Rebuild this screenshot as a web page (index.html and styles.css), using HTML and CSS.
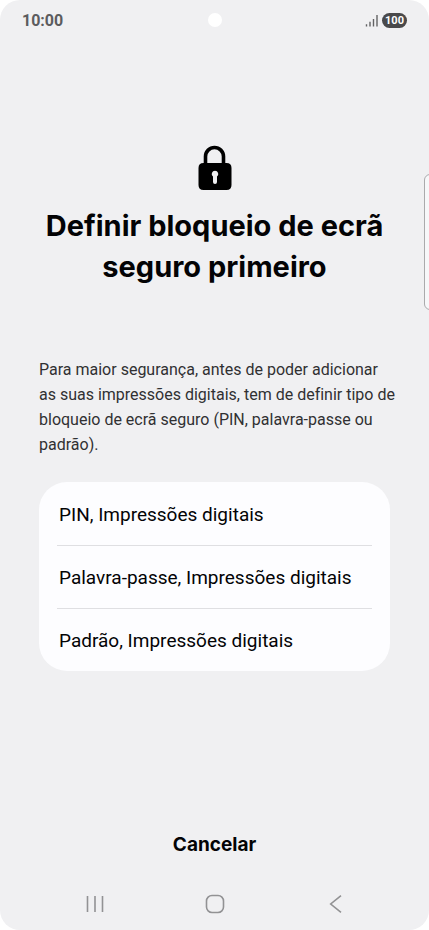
FILE: index.html
```html
<!DOCTYPE html>
<html lang="pt">
<head>
<meta charset="utf-8">
<meta name="viewport" content="width=device-width, initial-scale=1">
<title>Definir bloqueio de ecrã</title>
<link rel="stylesheet" href="styles.css">
</head>
<body>
<div class="screen">
  <header class="status">
    <time class="clock">10:00</time>
    <span class="camera"></span>
    <div class="indicators">
      <svg class="signal" viewBox="0 0 13 13" aria-hidden="true">
        <path d="M1.5 10.2v2.300M5 7.700v4.800M8.500 5v7.500M12 1v11.500"/>
      </svg>
      <span class="battery">100</span>
    </div>
  </header>
  <main class="content">
    <svg class="lock" viewBox="0 0 34 46" aria-hidden="true">
      <path class="shackle" d="M7.500 20V11.500a9 9 0 0 1 18 0V20"/>
      <path class="case" fill-rule="evenodd" d="M5.500 18H28.500Q33.500 18 33.500 23V40Q33.500 45 28.500 45H5.500Q0.500 45 0.500 40V23Q0.500 18 5.500 18ZM17 25.700A3.300 3.300 0 0 0 15 31.600V37A2 2 0 0 0 19 37V31.600A3.300 3.300 0 0 0 17 25.700Z"/>
    </svg>
    <h1 class="title">Definir bloqueio de ecrã seguro primeiro</h1>
    <p class="description">Para maior segurança, antes de poder adicionar as suas impressões digitais, tem de definir tipo de bloqueio de ecrã seguro (PIN, palavra-passe ou padrão).</p>
    <ul class="options">
      <li class="item"><button class="option" type="button">PIN, Impressões digitais</button></li>
      <li class="item"><button class="option" type="button">Palavra-passe, Impressões digitais</button></li>
      <li class="item"><button class="option" type="button">Padrão, Impressões digitais</button></li>
    </ul>
  </main>
  <button class="cancel" type="button">Cancelar</button>
  <nav class="navbar">
    <button class="key" type="button" aria-label="Recentes">
      <svg class="glyph" viewBox="0 0 20 20"><path d="M2.500 2v16M10 2v16M17.500 2v16"/></svg>
    </button>
    <button class="key" type="button" aria-label="Início">
      <svg class="glyph" viewBox="0 0 20 20"><rect x="1.500" y="1.500" width="17" height="17" rx="5.500"/></svg>
    </button>
    <button class="key" type="button" aria-label="Voltar">
      <svg class="glyph" viewBox="0 0 20 20"><path d="M16 1.700L5.700 10l10.300 8.300"/></svg>
    </button>
  </nav>
  <span class="edge-handle"></span>
</div>
</body>
</html>
```
FILE: styles.css
```css
* {
  box-sizing: border-box;
}

body {
  margin: 0;
  background: #fff;
  font-family: Roboto, "Liberation Sans", sans-serif;
  font-variant-ligatures: none;
  color: #030305;
}

button {
  border: 0;
  padding: 0;
  background: none;
  font: inherit;
  color: inherit;
  cursor: pointer;
}

.screen {
  position: relative;
  display: flex;
  flex-direction: column;
  min-height: 100vh;
  overflow: hidden;
  border-radius: 20px;
  background: #f0f0f2;
}

.status {
  display: grid;
  grid-template-columns: 1fr auto 1fr;
  align-items: center;
  height: 40px;
  padding: 0 22px;
}

.clock {
  font-size: 16px;
  font-weight: 700;
  color: #5c5c5e;
}

.camera {
  width: 14px;
  height: 14px;
  border-radius: 50%;
  background: #fff;
}

.indicators {
  display: flex;
  align-items: center;
  justify-content: flex-end;
  gap: 4px;
}

.signal {
  width: 13px;
  height: 13px;
  fill: none;
  stroke: #626264;
  stroke-width: 1.4;
}

.battery {
  width: 25px;
  border-radius: 8px;
  background: #49494b;
  font-size: 11px;
  font-weight: 700;
  line-height: 15px;
  text-align: center;
  color: #fff;
}

.content {
  display: flex;
  flex: 1;
  flex-direction: column;
  padding: 105px 39px 0;
}

.lock {
  align-self: center;
  width: 34px;
  height: 46px;
}

.shackle {
  fill: none;
  stroke: #000;
  stroke-width: 3.6;
}

.title {
  margin: 14px 0 0;
  font-family: Inter, Roboto, sans-serif;
  font-size: 29px;
  font-weight: 700;
  line-height: 41px;
  text-align: center;
}

.description {
  margin: 70px -8px 0 0;
  font-size: 16px;
  line-height: 25px;
  color: #303032;
}

.options {
  margin: 25px 0 0;
  padding: 1px 18px 0;
  border-radius: 28px;
  background: #fdfdff;
  list-style: none;
}

.item + .item {
  border-top: 1px solid #dfdfe2;
}

.option {
  width: 100%;
  padding: 2px 2px 0;
  font-size: 19px;
  line-height: 60px;
  text-align: left;
}

.cancel {
  align-self: center;
  font-family: Inter, Roboto, sans-serif;
  font-size: 19px;
  font-weight: 700;
  line-height: 40px;
}

.navbar {
  display: flex;
  justify-content: space-between;
  padding: 28px 83px 15px 84px;
}

.key {
  display: flex;
}

.glyph {
  width: 20px;
  height: 20px;
  margin: 1px;
  fill: none;
  stroke: #929294;
  stroke-width: 1.6;
}

.edge-handle {
  position: absolute;
  top: 174px;
  right: -8px;
  width: 13px;
  height: 136px;
  border: 1px solid #aaaaac;
  border-radius: 6px;
  background: #f7f7f9;
}
```
